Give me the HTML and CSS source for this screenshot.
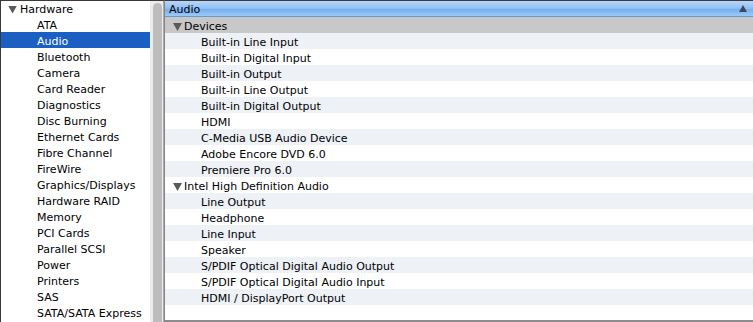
FILE: index.html
```html
<!DOCTYPE html>
<html>
<head>
<meta charset="utf-8">
<link rel="stylesheet" href="styles.css">
</head>
<body>
<div class="window">
  <div class="sidebar">
    <ul class="tree">
      <li class="group"><span class="tri"></span>Hardware</li>
      <li class="item">ATA</li>
      <li class="item selected">Audio</li>
      <li class="item">Bluetooth</li>
      <li class="item">Camera</li>
      <li class="item">Card Reader</li>
      <li class="item">Diagnostics</li>
      <li class="item">Disc Burning</li>
      <li class="item">Ethernet Cards</li>
      <li class="item">Fibre Channel</li>
      <li class="item">FireWire</li>
      <li class="item">Graphics/Displays</li>
      <li class="item">Hardware RAID</li>
      <li class="item">Memory</li>
      <li class="item">PCI Cards</li>
      <li class="item">Parallel SCSI</li>
      <li class="item">Power</li>
      <li class="item">Printers</li>
      <li class="item">SAS</li>
      <li class="item">SATA/SATA Express</li>
    </ul>
    <div class="track"><div class="thumb"></div></div>
  </div>
  <div class="main">
    <div class="header"><span class="htext">Audio</span><span class="sort"></span></div>
    <ul class="rows">
      <li class="grp gray"><span class="tri"></span>Devices</li>
      <li class="row alt">Built-in Line Input</li>
      <li class="row">Built-in Digital Input</li>
      <li class="row alt">Built-in Output</li>
      <li class="row">Built-in Line Output</li>
      <li class="row alt">Built-in Digital Output</li>
      <li class="row">HDMI</li>
      <li class="row alt">C-Media USB Audio Device</li>
      <li class="row">Adobe Encore DVD 6.0</li>
      <li class="row alt">Premiere Pro 6.0</li>
      <li class="grp"><span class="tri"></span>Intel High Definition Audio</li>
      <li class="row alt">Line Output</li>
      <li class="row">Headphone</li>
      <li class="row alt">Line Input</li>
      <li class="row">Speaker</li>
      <li class="row alt">S/PDIF Optical Digital Audio Output</li>
      <li class="row">S/PDIF Optical Digital Audio Input</li>
      <li class="row alt">HDMI / DisplayPort Output</li>
      <li class="row filler"></li>
    </ul>
  </div>
</div>
</body>
</html>
```
FILE: styles.css
```css
html, body {
  margin: 0;
  padding: 0;
  background: #ffffff;
}
body {
  font-family: "DejaVu Sans", "Liberation Sans", sans-serif;
  font-size: 11px;
  color: #000;
}
.window {
  display: flex;
  height: 322px;
  width: 753px;
  overflow: hidden;
}
.sidebar {
  display: flex;
  border-top: 1px solid #3a3a3a;
  border-left: 1px solid #3a3a3a;
  background: #fff;
}
ul {
  list-style: none;
  margin: 0;
  padding: 0;
}
.tree {
  width: 149px;
}
.tree li {
  height: 16px;
  line-height: 12px;
  padding-top: 4px;
  box-sizing: border-box;
  white-space: nowrap;
}
.tree .group {
  display: flex;
  align-items: center;
  padding-top: 3px;
  padding-left: 7px;
  margin-top: -1px;
}
.tri {
  display: inline-block;
  width: 9px;
  height: 8px;
  background: #5a5a5a;
  clip-path: polygon(0 0, 100% 0, 50% 100%);
  margin-right: 3px;
  flex: none;
}
.tree .item {
  padding-left: 36px;
}
.tree .selected {
  background: #1b5fc3;
  color: #fff;
}
.track {
  width: 14px;
  background: #ececec;
  padding: 2px 3px 0 3px;
  box-sizing: border-box;
  border-right: 1px solid #a9a9a9;
}
.thumb {
  width: 9px;
  height: 340px;
  background: #bdbdbd;
  border-radius: 5px;
}
.main {
  flex: 1;
  display: flex;
  flex-direction: column;
  border-top: 1px solid #3a3a3a;
  border-left: 1px solid #858585;
  border-bottom: 2px solid #8c8c8c;
  box-sizing: border-box;
  height: 322px;
}
.header {
  height: 16px;
  display: flex;
  justify-content: space-between;
  align-items: center;
  padding: 0 6px 0 4px;
  background: linear-gradient(#b8d6f8, #8ebff4 50%, #72acef 51%, #9ccaf8);
  box-sizing: border-box;
  border-bottom: 1px solid #6a98d0;
}
.htext {
  line-height: 12px;
  padding-top: 3px;
}
.sort {
  width: 0;
  height: 0;
  border-left: 4px solid transparent;
  border-right: 4px solid transparent;
  border-bottom: 7px solid #3a4a5c;
}
.rows {
  flex: 1;
  display: flex;
  flex-direction: column;
}
.rows li {
  height: 16px;
  line-height: 12px;
  padding-top: 4px;
  box-sizing: border-box;
  white-space: nowrap;
  flex: none;
}
.rows .grp {
  display: flex;
  align-items: center;
  padding-left: 8px;
}
.rows .grp .tri {
  margin-right: 2px;
}
.rows .gray {
  background: #c8c8c8;
}
.rows .row {
  padding-left: 36px;
}
.rows .alt {
  background: #eef1f6;
}
.rows .filler {
  flex: 1;
}
```
